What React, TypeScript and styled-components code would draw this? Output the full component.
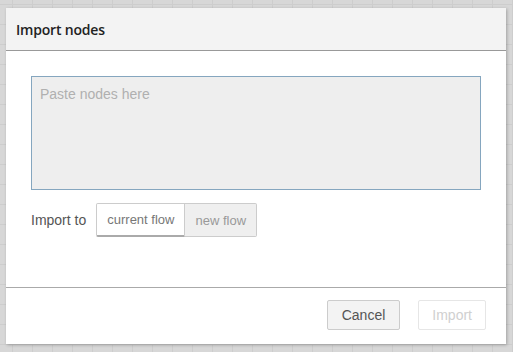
import React from "react";
import styled, { createGlobalStyle } from "styled-components";

const Global = createGlobalStyle`
  html, body { margin: 0; padding: 0; }
  body {
    width: 513px;
    height: 352px;
    overflow: hidden;
    font-family: "Liberation Sans", Arial, sans-serif;
    background-color: #d7d7d7;
    background-image:
      linear-gradient(to right, #cdcdcd 1px, transparent 1px),
      linear-gradient(to bottom, #cdcdcd 1px, transparent 1px);
    background-size: 20px 20px;
    background-position: 12px 4px;
  }
`;

const Stage = styled.div`
  padding: 8px 7px 8px 6px;
  box-sizing: border-box;
  width: 513px;
  height: 352px;
`;

const Dialog = styled.div`
  width: 500px;
  height: 336px;
  background: #fff;
  box-shadow: 1px 1px 3px rgba(0, 0, 0, 0.25);
  display: flex;
  flex-direction: column;
`;

const Header = styled.div`
  height: 43px;
  box-sizing: border-box;
  background: #f3f3f3;
  border-bottom: 1px solid #999;
  display: flex;
  align-items: center;
  padding: 1px 10px 0 10px;
`;

const Title = styled.h1`
  margin: 0;
  font-family: "Open Sans", "Liberation Sans", sans-serif;
  font-size: 14px;
  font-weight: 600;
  letter-spacing: -0.2px;
  color: #222;
`;

const Body = styled.div`
  flex: 1;
  padding: 25px 25px 0 25px;
  display: flex;
  flex-direction: column;
  gap: 13px;
  border-bottom: 1px solid #aaa;
`;

const Paste = styled.textarea`
  width: 450px;
  height: 114px;
  box-sizing: border-box;
  margin: 0;
  background: #eee;
  border: 1px solid #85a6bf;
  border-radius: 0;
  padding: 9px 8px;
  resize: none;
  outline: none;
  font-family: "Liberation Sans", Arial, sans-serif;
  font-size: 14px;
  color: #333;
  &::placeholder { color: #b0b0b0; }
`;

const Row = styled.div`
  display: flex;
  align-items: center;
  gap: 10px;
`;

const Label = styled.span`
  font-size: 14px;
  color: #555;
`;

const Group = styled.div`
  display: flex;
`;

const Toggle = styled.button<{ $selected?: boolean }>`
  height: 34px;
  box-sizing: border-box;
  padding: 0 10px;
  margin: 0;
  font-family: "Liberation Sans", Arial, sans-serif;
  font-size: 13px;
  border: 1px solid #ccc;
  border-radius: 0;
  cursor: pointer;
  background: ${(p) => (p.$selected ? "#fff" : "#efefef")};
  color: ${(p) => (p.$selected ? "#777" : "#999")};
  border-bottom: ${(p) => (p.$selected ? "2px solid #aaa" : "1px solid #ccc")};
  & + & { border-left: none; }
  &:first-child { border-radius: 2px 0 0 2px; }
  &:last-child { border-radius: 0 2px 2px 0; }
`;

const Footer = styled.div`
  height: 56px;
  display: flex;
  justify-content: flex-end;
  align-items: flex-start;
  padding: 12px 20px 0 0;
  box-sizing: border-box;
  gap: 18px;
`;

const Btn = styled.button<{ $disabled?: boolean }>`
  height: 30px;
  box-sizing: border-box;
  padding: 0 ${(p) => (p.$disabled ? 13 : 14)}px;
  font-family: "Liberation Sans", Arial, sans-serif;
  font-size: 14px;
  border-radius: 2px;
  border: 1px solid ${(p) => (p.$disabled ? "#e6e6e6" : "#ccc")};
  background: ${(p) => (p.$disabled ? "#fff" : "#f3f3f3")};
  color: ${(p) => (p.$disabled ? "#d0d0d0" : "#555")};
  cursor: ${(p) => (p.$disabled ? "default" : "pointer")};
`;

export default function App() {
  return (
    <>
      <Global />
      <Stage>
        <Dialog>
          <Header>
            <Title>Import nodes</Title>
          </Header>
          <Body>
            <Paste placeholder="Paste nodes here" />
            <Row>
              <Label>Import to</Label>
              <Group>
                <Toggle $selected>current flow</Toggle>
                <Toggle>new flow</Toggle>
              </Group>
            </Row>
          </Body>
          <Footer>
            <Btn>Cancel</Btn>
            <Btn $disabled>Import</Btn>
          </Footer>
        </Dialog>
      </Stage>
    </>
  );
}
